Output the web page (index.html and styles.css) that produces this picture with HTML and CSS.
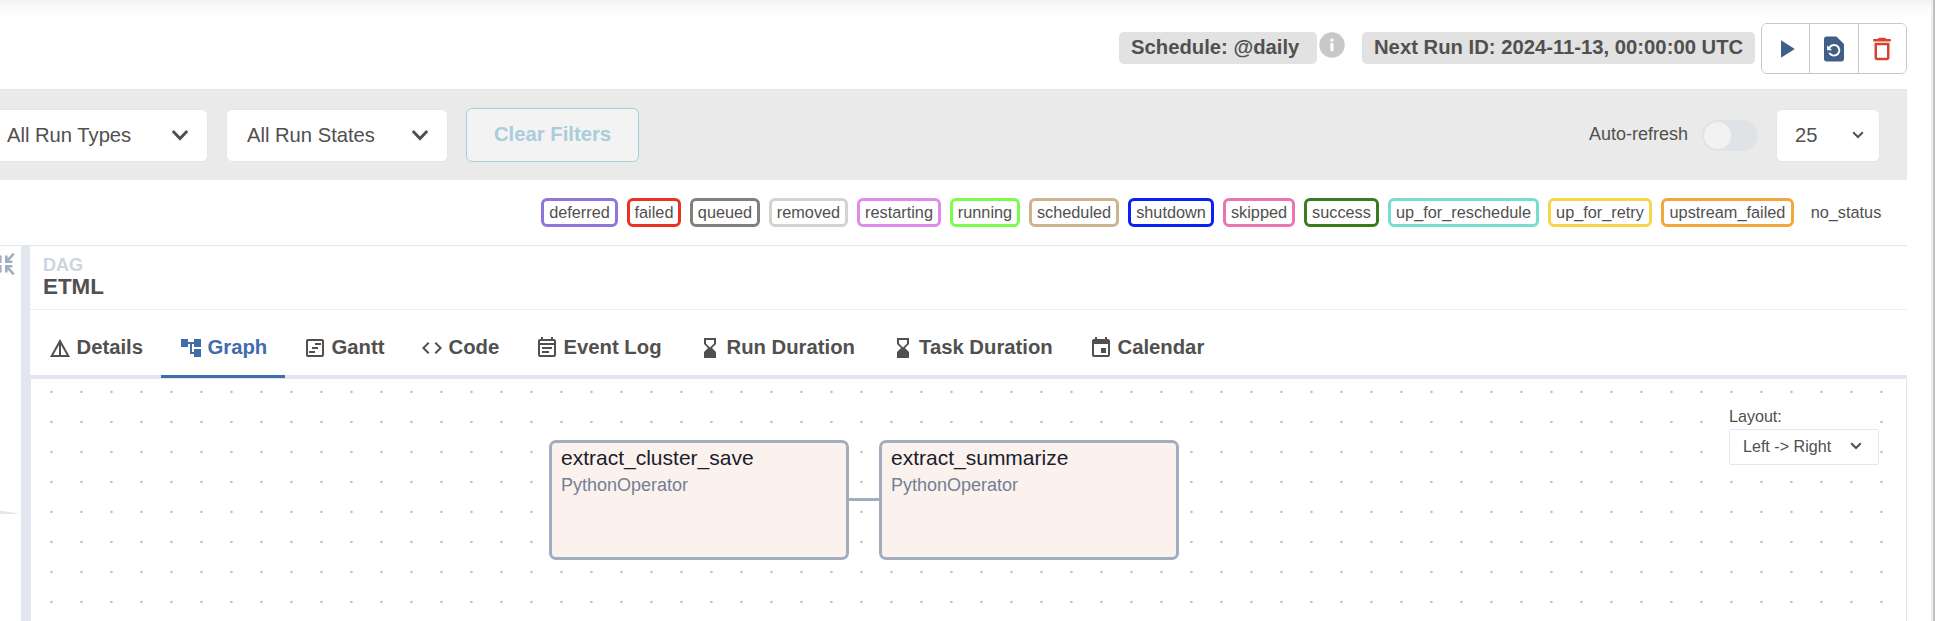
FILE: index.html
```html
<!DOCTYPE html>
<html lang="en">
<head>
<meta charset="utf-8">
<title>ETML - Grid - Airflow</title>
<link rel="stylesheet" href="styles.css">
</head>
<body>
<div class="page">
  <main class="content">
    <header class="header">
      <span class="badge badge-schedule">Schedule: @daily</span>
      <svg class="info" viewBox="0 0 26 26"><circle cx="13" cy="13" r="12.7" fill="#c8c8c8"/><path d="M11.4 6.7h3v2.7h-3zM11.4 11h3v8.3h-3z" fill="#fff"/></svg>
      <span class="badge badge-next">Next Run ID: 2024-11-13, 00:00:00 UTC</span>
      <div class="actions">
        <button class="action"><svg viewBox="0 0 24 24"><path d="M8 5v14l11-7z"/></svg></button>
        <button class="action"><svg viewBox="0 0 24 24"><path d="M14 2H6c-1.1 0-1.99.9-1.99 2L4 20c0 1.1.89 2 1.99 2H18c1.1 0 2-.9 2-2V8l-6-6zm-2 16c-2.05 0-3.81-1.24-4.58-3h1.71c.63.9 1.68 1.5 2.87 1.5 1.93 0 3.5-1.57 3.5-3.5S13.93 9.5 12 9.5c-1.35 0-2.52.78-3.1 1.9l1.6 1.6h-4V9l1.3 1.3C8.69 8.92 10.23 8 12 8c2.76 0 5 2.24 5 5s-2.24 5-5 5z"/></svg></button>
        <button class="action danger"><svg viewBox="0 0 24 24"><path d="M16 9v10H8V9h8m-1.5-6h-5l-1 1H5v2h14V4h-3.5l-1-1zM18 7H6v12c0 1.1.9 2 2 2h8c1.1 0 2-.9 2-2V7z"/></svg></button>
      </div>
    </header>

    <section class="filters">
      <div class="select select-types"><span>All Run Types</span><svg class="chevron" viewBox="0 0 18 12"><path d="M1.8 2l7.2 7.6L16.2 2"/></svg></div>
      <div class="select select-states"><span>All Run States</span><svg class="chevron" viewBox="0 0 18 12"><path d="M1.8 2l7.2 7.6L16.2 2"/></svg></div>
      <button class="clear">Clear Filters</button>
      <div class="refresh"><span class="refresh-label">Auto-refresh</span><span class="toggle"><i class="knob"></i></span></div>
      <div class="select select-count"><span>25</span><svg class="chevron-small" viewBox="0 0 12 8"><path d="M1.2 1.3L6 6l4.8-4.7"/></svg></div>
    </section>

    <section class="legend">
      <span class="state deferred">deferred</span>
      <span class="state failed">failed</span>
      <span class="state queued">queued</span>
      <span class="state removed">removed</span>
      <span class="state restarting">restarting</span>
      <span class="state running">running</span>
      <span class="state scheduled">scheduled</span>
      <span class="state shutdown">shutdown</span>
      <span class="state skipped">skipped</span>
      <span class="state success">success</span>
      <span class="state reschedule">up_for_reschedule</span>
      <span class="state retry">up_for_retry</span>
      <span class="state upstream">upstream_failed</span>
      <span class="state none">no_status</span>
    </section>

    <section class="workspace">
      <aside class="grid-panel">
        <svg class="collapse" viewBox="0 0 15 24"><g fill="none" stroke="#a0aec0" stroke-width="2.6"><path d="M6.3 3.5v6.2h6M6.8 9.2l7-7.5M6.3 20.5v-6.2h6M6.8 14.8l7 7.5M.3 3.5v6.2h-2M.3 20.5v-6.2h-2"/></g></svg>
        <svg class="wedge" viewBox="0 0 21 4"><path d="M0 .4L21 4H0z" fill="#e2e6ee"/></svg>
      </aside>
      <div class="divider"></div>
      <div class="details">
        <div class="crumb"><span class="crumb-label">DAG</span><span class="crumb-name">ETML</span></div>
        <nav class="tabs">
          <a class="tab t-details"><svg viewBox="0 0 24 24"><path d="M12 3L2 21h20L12 3zm1 5.92L18.6 19H13V8.92zm-2 0V19H5.4L11 8.92z"/></svg><span>Details</span></a>
          <a class="tab t-graph active"><svg viewBox="0 0 24 24"><path d="M22 11V3h-7v3H9V3H2v8h7V8h2v10h4v3h7v-8h-7v3h-2V8h2v3z"/></svg><span>Graph</span></a>
          <a class="tab t-gantt"><svg viewBox="0 0 24 24"><path d="M19 5v14H5V5h14m0-2H5c-1.1 0-2 .9-2 2v14c0 1.1.9 2 2 2h14c1.1 0 2-.9 2-2V5c0-1.1-.9-2-2-2zM6 15h6v2H6zM12 7h6v2h-6zM9 11h6v2H9z"/></svg><span>Gantt</span></a>
          <a class="tab t-code"><svg viewBox="0 0 24 24"><path d="M9.4 16.6L4.8 12l4.6-4.6L8 6l-6 6 6 6 1.4-1.4zm5.2 0l4.6-4.6-4.6-4.6L16 6l6 6-6 6-1.4-1.4z"/></svg><span>Code</span></a>
          <a class="tab t-log"><svg viewBox="0 0 24 24"><path d="M19 3h-1V1h-2v2H8V1H6v2H5c-1.1 0-2 .9-2 2v14c0 1.1.9 2 2 2h14c1.1 0 2-.9 2-2V5c0-1.1-.9-2-2-2zm0 16H5V9h14v10zM5 7V5h14v2H5zM7 11h10v2H7zM7 15h7v2H7z"/></svg><span>Event Log</span></a>
          <a class="tab t-run"><svg viewBox="0 0 24 24"><path d="M18 22l-.01-6L14 12l3.99-4.01L18 2H6v6l4 4-4 3.99V22h12zM8 7.5V4h8v3.5l-4 4-4-4z"/></svg><span>Run Duration</span></a>
          <a class="tab t-task"><svg viewBox="0 0 24 24"><path d="M18 22l-.01-6L14 12l3.99-4.01L18 2H6v6l4 4-4 3.99V22h12zM8 7.5V4h8v3.5l-4 4-4-4z"/></svg><span>Task Duration</span></a>
          <a class="tab t-cal"><svg viewBox="0 0 24 24"><path d="M17 12h-5v5h5v-5zM16 1v2H8V1H6v2H5c-1.11 0-1.99.9-1.99 2L3 19c0 1.1.89 2 2 2h14c1.1 0 2-.9 2-2V5c0-1.1-.9-2-2-2h-1V1h-2zm3 18H5V8h14v11z"/></svg><span>Calendar</span></a>
        </nav>
        <div class="canvas">
          <svg class="dots" width="1875" height="242"><defs><pattern id="dot" width="30" height="30" x="5.5" y="-2.1" patternUnits="userSpaceOnUse"><circle cx="15" cy="15" r="1.1" fill="#a2a2a2"/></pattern></defs><rect width="1875" height="242" fill="url(#dot)"/></svg>
          <div class="edge"></div>
          <div class="node node-a"><span class="node-title">extract_cluster_save</span><span class="node-type">PythonOperator</span></div>
          <div class="node node-b"><span class="node-title">extract_summarize</span><span class="node-type">PythonOperator</span></div>
          <div class="layout"><span class="layout-label">Layout:</span><div class="layout-select"><span>Left -&gt; Right</span><svg class="chevron-small" viewBox="0 0 12 8"><path d="M1.2 1.3L6 6l4.8-4.7"/></svg></div></div>
        </div>
      </div>
    </section>
  </main>
  <div class="scrollbar"></div>
</div>
</body>
</html>
```

FILE: styles.css
```css
* { box-sizing: border-box; }
body { margin: 0; font-family: "Liberation Sans", Arial, sans-serif; color: #51504f; background: #fff; }
button { font-family: inherit; margin: 0; padding: 0; background: #fff; }
svg { display: block; flex: none; }
.page { display: flex; width: 1935px; height: 621px; overflow: hidden;
  background: linear-gradient(#f2f2f2 0, #f5f5f5 3px, #fafafa 7px, #fdfdfd 13px, #fff 20px) no-repeat 0 0 / 1935px 20px, #fff; }
.content { width: 1907px; flex: none; display: flex; flex-direction: column; }
.scrollbar { width: 4px; margin-left: 24px; flex: none; background: linear-gradient(90deg, #eee 0 2px, #c1c1c1 2px); }

.header { height: 89px; display: flex; justify-content: flex-end; align-items: flex-start; }
.badge { margin-top: 32px; height: 32px; line-height: 30px; padding-left: 12px; border-radius: 5px; background: #e2e2e2; font-size: 20.25px; font-weight: 700; white-space: nowrap; }
.badge-schedule { width: 198px; }
.badge-next { width: 393px; margin-left: 17px; }
.info { width: 26px; height: 26px; margin: 32px 0 0 2px; }
.actions { display: flex; margin: 23px 0 0 6px; width: 146px; height: 51px; border: 1px solid #c8c8c8; border-radius: 6px; background: #fff; overflow: hidden; }
.action { flex: 1; display: flex; align-items: center; justify-content: center; border: 0; border-right: 1px solid #c8c8c8; }
.action:last-child { border-right: 0; }
.action svg { width: 30px; height: 30px; fill: #3f5f86; }
.action.danger svg { fill: #d5452e; }

.filters { height: 91px; display: flex; align-items: center; padding-right: 27px; background: #eaeaea; border-top: 1px solid #e2e6ee; }
.select { height: 53px; display: flex; align-items: center; justify-content: space-between; background: #fff; border: 1px solid #e2e6ee; border-radius: 6px; font-size: 20.2px; }
.select-types { width: 228px; margin-left: -20px; padding: 0 18px 0 26px; }
.select-states { width: 222px; margin-left: 18px; padding: 0 18px 0 20px; }
.chevron { width: 18px; height: 12px; fill: none; stroke: #51504f; stroke-width: 2.9; }
.chevron-small { width: 12px; height: 8px; fill: none; stroke: #51504f; stroke-width: 2; }
.clear { width: 173px; height: 54px; margin-left: 18px; padding-bottom: 1px; border: 1px solid #aacddb; border-radius: 6px; background: #f3f3f3; color: #aacddb; font-size: 20.3px; font-weight: 700; }
.refresh { display: flex; align-items: center; gap: 14px; margin-left: auto; font-size: 18px; }
.refresh-label { padding-bottom: 2px; }
.toggle { width: 56px; height: 31px; padding: 2px; border-radius: 16px; background: #dfe2e6; }
.knob { display: block; width: 27px; height: 27px; border-radius: 50%; background: #f2f2f2; }
.select-count { width: 104px; margin-left: 18px; padding: 0 15px 0 18px; }

.legend { height: 66px; display: flex; gap: 9px; align-items: flex-start; justify-content: flex-end; padding: 18px 18px 0 0; border-bottom: 1px solid #e2e6ee; }
.state { height: 29px; line-height: 23px; border: 3px solid; border-radius: 6px; font-size: 16.3px; display: flex; justify-content: center; background: #fff; white-space: nowrap; }
.deferred { width: 77px; border-color: #9076d8; }
.failed { width: 54px; border-color: #ea3323; }
.queued { width: 70px; border-color: #808080; }
.removed { width: 79px; border-color: #d3d3d3; }
.restarting { width: 84px; border-color: #df8bea; }
.running { width: 70px; border-color: #7bfb4b; }
.scheduled { width: 90px; border-color: #cdb48f; }
.shutdown { width: 86px; border-color: #0a20f5; }
.skipped { width: 72px; border-color: #ea75b2; }
.success { width: 75px; border-color: #397c20; }
.reschedule { width: 151px; border-color: #77ddd0; }
.retry { width: 104px; border-color: #f7d648; }
.upstream { width: 133px; border-color: #f1a73a; }
.none { width: 86px; border-color: transparent; }

.workspace { display: flex; height: 375px; }
.grid-panel { width: 21px; flex: none; padding-top: 6px; }
.collapse { width: 15px; height: 24px; overflow: hidden; }
.wedge { width: 21px; height: 4px; margin-top: 234px; }
.divider { width: 9px; flex: none; background: #e2e6ee; }
.details { flex: 1; display: flex; flex-direction: column; }
.crumb { height: 64px; padding: 8px 0 0 13px; border-bottom: 1px solid #ebedf0; display: flex; flex-direction: column; font-weight: 700; }
.crumb-label { color: #cbd5e0; font-size: 18px; line-height: 22px; }
.crumb-name { font-size: 22.4px; line-height: 22px; }
.tabs { height: 69px; display: flex; border-bottom: 4px solid #e2e6ee; }
.tab { height: 68px; padding: 0 0 18px 18px; display: flex; align-items: flex-end; line-height: 24px; font-size: 20.3px; font-weight: 700; white-space: nowrap; }
.tab svg { width: 24px; height: 24px; margin-right: 4.5px; fill: currentColor; }
.tab span { padding-bottom: 1px; }
.t-details { width: 131px; }
.t-graph { width: 124px; }
.t-gantt { width: 117px; }
.t-code { width: 115px; }
.t-log { width: 163px; }
.t-run { width: 192.5px; }
.t-task { width: 198.5px; }
.t-cal { width: 150px; }
.tab.active { color: #406bad; border-bottom: 3px solid #406bad; padding-bottom: 15px; }
.canvas { position: relative; height: 242px; border: solid #e2e6ee; border-width: 0 1px; overflow: hidden; }
.dots { width: 1875px; height: 242px; }
.node { position: absolute; top: 61px; width: 300px; height: 120px; padding: 2px 9px; border: 3px solid #a0aec0; border-radius: 7px; background: #fcf2ed; display: flex; flex-direction: column; }
.node-a { left: 518px; }
.node-b { left: 848px; }
.node-title { color: #1a202c; font-size: 21px; line-height: 26px; }
.node-type { color: #718096; font-size: 18px; line-height: 28px; }
.edge { position: absolute; left: 816px; top: 119px; width: 34px; height: 3px; background: #a0aec0; }
.layout { position: absolute; left: 1698px; top: 27px; width: 150px; font-size: 16.1px; background: rgba(255, 255, 255, .9); }
.layout-label { display: block; height: 23px; line-height: 20px; }
.layout-select { height: 36px; display: flex; align-items: center; justify-content: space-between; padding: 0 16px 2px 13px; border: 1px solid #e2e6ee; border-radius: 2px; }
```
